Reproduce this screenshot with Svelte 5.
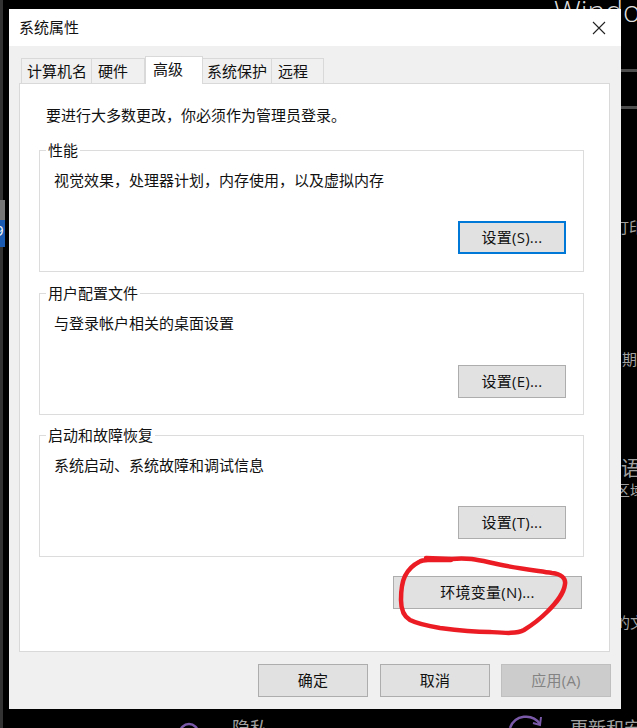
<script>
  const tabs = [
    { label: '计算机名', width: 71 },
    { label: '硬件', width: 53 },
    { label: '高级', width: 58, active: true },
    { label: '系统保护', width: 69, tight: true },
    { label: '远程', width: 52 }
  ];
  const groups = [
    { title: '性能', text: '视觉效果，处理器计划，内存使用，以及虚拟内存', button: '设置(S)...', focus: true },
    { title: '用户配置文件', text: '与登录帐户相关的桌面设置', button: '设置(E)...' },
    { title: '启动和故障恢复', text: '系统启动、系统故障和调试信息', button: '设置(T)...' }
  ];
  const backdrop = [
    { text: '打印', x: 614, y: 218, size: 15 },
    { text: '期', x: 622, y: 350, size: 15 },
    { text: '语', x: 621, y: 457, size: 20 },
    { text: '区域', x: 615, y: 481, size: 15 },
    { text: '的文', x: 615, y: 613, size: 15 },
    { text: '隐私', x: 232, y: 718, size: 18 },
    { text: '更新和安全', x: 570, y: 718, size: 18 }
  ];
</script>

<main class="desktop">
  <div class="strip"></div>
  <div class="task"><span>9</span></div>
  <div class="windows">Windows</div>
  <div class="rule rule-a"></div>
  <div class="rule rule-b"></div>
  {#each backdrop as b}
    <span class="bg-text" style="left:{b.x}px;top:{b.y}px;font-size:{b.size}px">{b.text}</span>
  {/each}
  <svg class="bg-icons" width="637" height="728" viewBox="0 0 637 728" fill="none" stroke="#7a5aa8" stroke-width="2.5">
    <circle cx="189" cy="733" r="9" />
    <path d="M510 728a17 17 0 0 1 30 -4" />
    <path d="M541 717l-1 8-7-2" stroke-width="2" />
  </svg>

  <section class="dialog">
    <header class="titlebar">
      <span>系统属性</span>
      <svg class="close" width="14" height="14" viewBox="0 0 14 14" stroke="#222" stroke-width="1.1">
        <path d="M1 1l12 12M13 1L1 13" />
      </svg>
    </header>
    <div class="body">
      <div class="tabs">
        {#each tabs as t}
          <div class="tab" class:active={t.active} class:tight={t.tight} style="width:{t.width}px">{t.label}</div>
        {/each}
      </div>
      <div class="panel">
        <p class="intro">要进行大多数更改，你必须作为管理员登录。</p>
        {#each groups as g}
          <div class="group">
            <span class="legend">{g.title}</span>
            <p>{g.text}</p>
            <button class="btn set" class:focus={g.focus}>{g.button}</button>
          </div>
        {/each}
        <button class="btn env">环境变量(N)...</button>
      </div>
      <footer class="actions">
        <button class="btn act">确定</button>
        <button class="btn act">取消</button>
        <button class="btn act disabled">应用(A)</button>
      </footer>
    </div>
  </section>

  <svg class="scribble" width="637" height="728" viewBox="0 0 637 728" fill="none" stroke="#ec1c24" stroke-width="4.5" stroke-linecap="round" stroke-linejoin="round">
    <path d="M426 558L452 559C470 557 482 561 497 564C515 568 532 570 552 573C561 574 566 578 565 584C564 594 556 603 547 612C540 619 532 625 524 630C517 634 505 633 490 632C472 632 455 630 440 628C428 626 418 624 410 620C403 616 401 608 401 600C401 590 402 582 405 576C408 570 413 565 419 562C422 560 425 560 428 560L451 560" />
  </svg>
</main>

<style>
  :global(body) {
    margin: 0;
    background: #000;
  }
  .desktop {
    position: relative;
    width: 637px;
    height: 728px;
    overflow: hidden;
    background: #000;
    font-family: "Open Sans", "Noto Sans CJK SC", sans-serif;
    font-size: 15px;
    color: #111;
  }
  .strip {
    position: absolute;
    left: 0;
    top: 0;
    width: 3px;
    height: 728px;
    background: #333;
  }
  .task {
    position: absolute;
    left: 0;
    top: 200px;
    width: 5px;
    height: 47px;
    background: linear-gradient(#777 0 20px, #1a5ab0 20px);
    overflow: hidden;
  }
  .task span {
    position: absolute;
    left: -5px;
    top: 20px;
    color: #fff;
    font-size: 15px;
  }
  .windows {
    position: absolute;
    left: 554px;
    top: -10px;
    color: #ddd;
    font-family: "Open Sans", sans-serif;
    font-weight: 300;
    font-size: 30px;
    white-space: nowrap;
  }
  .rule {
    position: absolute;
    left: 621px;
    width: 16px;
    height: 3px;
    background: #4d4d4d;
  }
  .rule-a { top: 69px; }
  .rule-b { top: 106px; }
  .bg-text {
    position: absolute;
    color: #a0a0a0;
    white-space: nowrap;
    line-height: 1.2;
  }
  .bg-icons {
    position: absolute;
    left: 0;
    top: 0;
  }
  .dialog {
    position: absolute;
    left: 9px;
    top: 9px;
    width: 612px;
    height: 700px;
    display: flex;
    flex-direction: column;
    background: #f0f0f0;
  }
  .titlebar {
    height: 37px;
    flex: none;
    display: flex;
    align-items: center;
    justify-content: space-between;
    padding: 0 15px 0 10px;
    background: #fff;
    line-height: 1;
  }
  .body {
    flex: 1;
    display: flex;
    flex-direction: column;
    padding: 10px 11px 12px 10px;
    min-height: 0;
  }
  .tabs {
    display: flex;
    align-items: flex-end;
    height: 27px;
    padding-left: 2px;
    flex: none;
    position: relative;
    z-index: 1;
  }
  .tab {
    box-sizing: border-box;
    height: 25px;
    padding-left: 6px;
    line-height: 25px;
    background: #f0f0f0;
    border: 1px solid #d9d9d9;
    border-bottom: none;
    border-left-width: 0;
    white-space: nowrap;
  }
  .tab:first-child {
    border-left-width: 1px;
    padding-left: 5px;
  }
  .tab.tight {
    padding-left: 4px;
  }
  .tab.active {
    height: 28px;
    margin-bottom: -1px;
    padding-left: 7px;
    line-height: 24px;
    background: #fff;
    border-left-width: 1px;
  }
  .panel {
    box-sizing: border-box;
    width: 591px;
    height: 569px;
    flex: none;
    display: flex;
    flex-direction: column;
    align-items: flex-start;
    padding: 21px 0 0 19px;
    background: #fff;
    border: 1px solid #d9d9d9;
  }
  .intro {
    margin: -1px 0 24px 7px;
    line-height: 22px;
    white-space: nowrap;
  }
  .group {
    position: relative;
    box-sizing: border-box;
    width: 545px;
    height: 122px;
    margin-bottom: 21px;
    padding: 19px 17px 0 14px;
    border: 1px solid #dcdcdc;
    display: flex;
    flex-direction: column;
    align-items: flex-end;
  }
  .group:nth-of-type(2) {
    margin-bottom: 20px;
  }
  .group:nth-of-type(2) .set {
    margin-top: 32px;
  }
  .group p {
    margin: 0;
    align-self: flex-start;
    line-height: 20px;
    white-space: nowrap;
  }
  .legend {
    position: absolute;
    left: 6px;
    top: -11px;
    padding: 0 2px;
    background: #fff;
    line-height: 20px;
  }
  .btn {
    box-sizing: border-box;
    margin: 0;
    padding: 0;
    font: inherit;
    color: #111;
    background: #e1e1e1;
    border: 1px solid #adadad;
    border-radius: 0;
    line-height: 1;
    white-space: nowrap;
    letter-spacing: 0.25px;
  }
  .set {
    width: 108px;
    height: 33px;
    margin-top: 31px;
  }
  .set.focus {
    border: 2px solid #0078d7;
  }
  .env {
    width: 189px;
    height: 33px;
    margin: -2px 0 0 354px;
  }
  .actions {
    display: flex;
    gap: 11px;
    justify-content: flex-end;
    margin: 12px -1px 0 0;
  }
  .act {
    width: 110px;
    height: 33px;
  }
  .act:first-child {
    margin-right: 1px;
  }
  .act.disabled {
    background: #ccc;
    border-color: #bfbfbf;
    color: #838383;
  }
  .scribble {
    position: absolute;
    left: 0;
    top: 0;
    pointer-events: none;
  }
</style>
